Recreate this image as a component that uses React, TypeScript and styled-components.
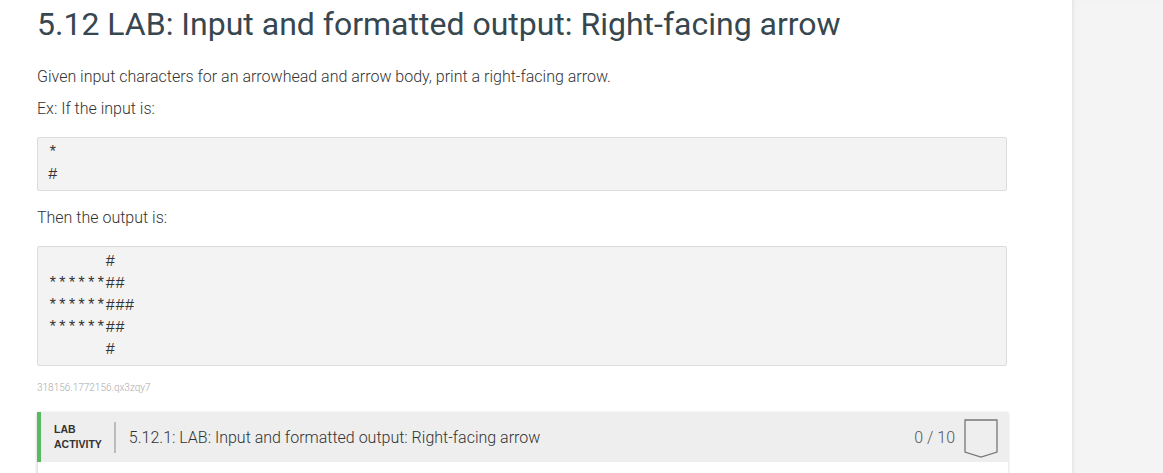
import React from "react";
import styled, { createGlobalStyle } from "styled-components";

const GlobalStyle = createGlobalStyle`
  html, body {
    margin: 0;
    padding: 0;
    background: #fff;
    overflow: hidden;
  }
  body {
    font-family: Roboto, "Liberation Sans", sans-serif;
    color: #333;
  }
`;

/* PAGE */

const Page = styled.div`
  display: flex;
  min-height: 473px;
`;

const Main = styled.main`
  width: 1072px;
  flex-shrink: 0;
  padding-left: 37px;
  box-sizing: border-box;
`;

const Sidebar = styled.aside`
  flex: 1;
  background: #f4f4f4;
  border-left: 1px solid #e6e6e6;
  box-shadow: inset 2px 0 2px rgba(0, 0, 0, 0.03);
`;

const Column = styled.div`
  width: 970px;
  display: flex;
  flex-direction: column;
`;

/* TEXT */

const Title = styled.h1`
  margin: 1px 0 0;
  font-size: 32px;
  line-height: 46px;
  font-weight: 400;
  color: #37474f;
`;

const Para = styled.p<{ $top: number }>`
  margin: ${(p) => p.$top}px 0 0;
  font-size: 16px;
  line-height: 20px;
  font-weight: 300;
  color: #333;
`;

const CodeBox = styled.pre<{ $top: number }>`
  margin: ${(p) => p.$top}px 0 0;
  padding: 4px 10px;
  background: #f3f3f3;
  border: 1px solid #dcdcdc;
  border-radius: 2px;
  font-family: "Liberation Mono", monospace;
  font-size: 16px;
  line-height: 22px;
  color: #333;
  white-space: pre;
`;

const Tag = styled.div`
  margin-top: 15px;
  font-size: 10px;
  line-height: 14px;
  font-weight: 300;
  color: #aaa;
`;

/* LAB ACTIVITY */

const Activity = styled.section`
  margin-top: 17px;
  width: 971px;
  box-shadow: 0 1px 3px rgba(0, 0, 0, 0.2);
`;

const ActivityBar = styled.header`
  height: 50px;
  display: flex;
  align-items: center;
  background: #eeeeee;
  border-left: 4px solid #57b960;
  padding: 0 10px 0 13px;
  box-sizing: border-box;
`;

const Label = styled.div`
  font-family: "Liberation Sans", Arial, sans-serif;
  font-weight: 700;
  font-size: 10.5px;
  line-height: 15px;
  color: #333;
  text-transform: uppercase;
`;

const Separator = styled.div`
  width: 2px;
  height: 31px;
  background: #bcbcbc;
  margin: 0 13px 0 12px;
`;

const ActivityTitle = styled.div`
  flex: 1;
  font-size: 16px;
  font-weight: 300;
  color: #333;
`;

const Score = styled.div`
  font-size: 16px;
  font-weight: 300;
  color: #555;
  margin-right: 9px;
`;

const ActivityBody = styled.div`
  height: 120px;
  background: #fff;
  border-left: 1px solid #e3e3e3;
`;

const Badge = () => (
  <svg width="34" height="40" viewBox="0 0 34 40" style={{ marginTop: 3 }}>
    <path d="M1 1 H33 V33 L17 38 L1 33 Z" fill="none" stroke="#777" strokeWidth="1.3" />
  </svg>
);

const inputLines = "*\n#";
const outputLines = "      #\n******##\n******###\n******##\n      #";

const App = () => {
  return (
    <Page>
      <GlobalStyle />
      <Main>
        <Column>
          <Title>5.12 LAB: Input and formatted output: Right-facing arrow</Title>

          <Para $top={20}>
            Given input characters for an arrowhead and arrow body, print a right-facing arrow.
          </Para>
          <Para $top={12}>Ex: If the input is:</Para>

          <CodeBox $top={18}>{inputLines}</CodeBox>

          <Para $top={17}>Then the output is:</Para>

          <CodeBox $top={18}>{outputLines}</CodeBox>

          <Tag>318156.1772156.qx3zqy7</Tag>

          {/* --- LAB ACTIVITY --- */}
          <Activity>
            <ActivityBar>
              <Label>
                Lab
                <br />
                Activity
              </Label>
              <Separator />
              <ActivityTitle>5.12.1: LAB: Input and formatted output: Right-facing arrow</ActivityTitle>
              <Score>0 / 10</Score>
              <Badge />
            </ActivityBar>
            <ActivityBody />
          </Activity>
        </Column>
      </Main>
      <Sidebar />
    </Page>
  );
};

export default App;
